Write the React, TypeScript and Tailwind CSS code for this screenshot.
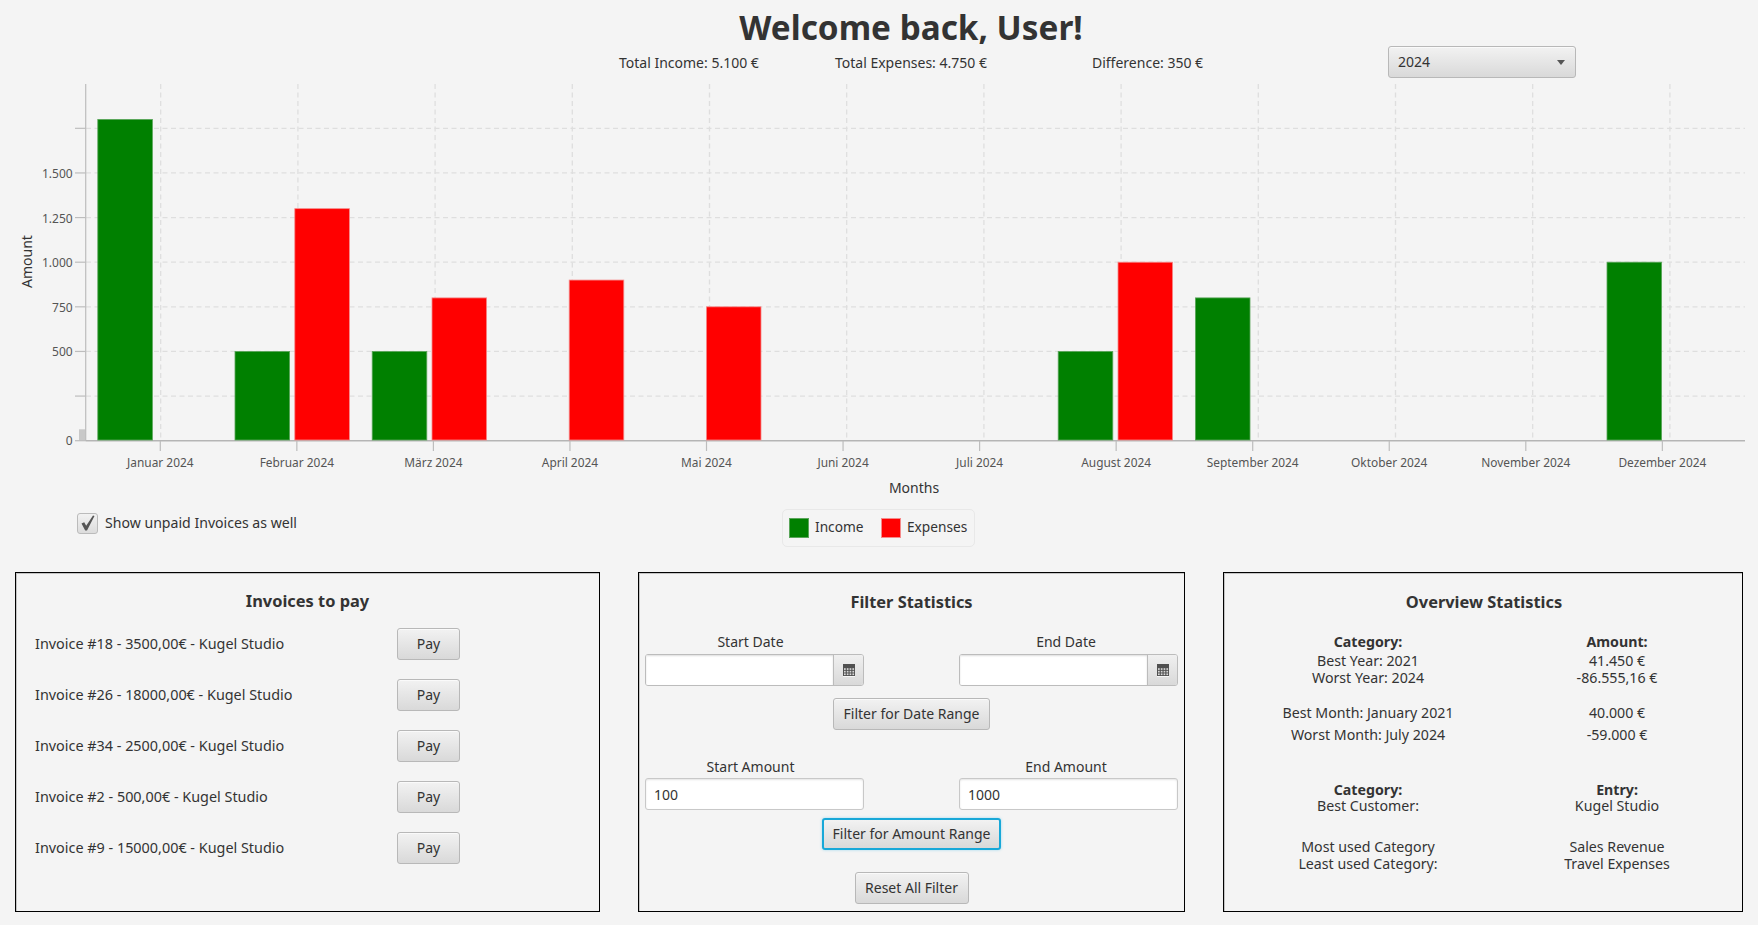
import React from "react";

const FONT = "font-['Noto_Sans','Open_Sans',sans-serif]";
const GREEN = "#008000";
const RED = "#ff0000";
const months = ["Januar 2024","Februar 2024","März 2024","April 2024","Mai 2024","Juni 2024","Juli 2024","August 2024","September 2024","Oktober 2024","November 2024","Dezember 2024"];
const income: Record<number, number> = { 0: 1800, 1: 500, 2: 500, 7: 500, 8: 800, 11: 1000 };
const expenses: Record<number, number> = { 1: 1300, 2: 800, 3: 900, 4: 750, 7: 1000 };

const Y0 = 84;
const yOf = (v: number) => 440.7 - Y0 - v * 0.1785;
const fontFamily = "'Noto Sans','Open Sans',sans-serif";

function Chart() {
  const ticks = [0, 250, 500, 750, 1000, 1250, 1500, 1750];
  const labelled = [0, 500, 750, 1000, 1250, 1500];
  return (
    <svg width={1758} height={418} className="block shrink-0" style={{ fontFamily }}>
      {ticks.slice(1).map((t) => (
        <line key={t} x1={86} x2={1745} y1={yOf(t)} y2={yOf(t)} stroke="#dedede" strokeWidth={1.3} strokeDasharray="5 3.5" />
      ))}
      {months.map((_, i) => (
        <line key={i} x1={160.7 + 137.2 * i} x2={160.7 + 137.2 * i} y1={0} y2={356} stroke="#dedede" strokeWidth={1.3} strokeDasharray="5 3.5" />
      ))}
      <rect x={79} y={345.3} width={6.7} height={11.4} fill="#c8c8c8" />
      <line x1={85.7} x2={85.7} y1={0} y2={357} stroke="#bdbdbd" strokeWidth={1.2} />
      <line x1={85.7} x2={1745} y1={356.7} y2={356.7} stroke="#b5b5b5" strokeWidth={1.5} />
      {ticks.map((t) => (
        <line key={t} x1={75} x2={85.7} y1={yOf(t)} y2={yOf(t)} stroke="#bdbdbd" strokeWidth={1.2} />
      ))}
      {labelled.map((t) => (
        <text key={t} x={72.7} y={yOf(t) + (t === 0 ? 4.5 : 5)} textAnchor="end" fontSize={12} fill="#555">{t === 0 ? "0" : t.toLocaleString("de-DE")}</text>
      ))}
      {months.map((m, i) => {
        const x = 160.3 + 136.55 * i;
        return (
          <g key={m}>
            <line x1={x} x2={x} y1={357} y2={367} stroke="#bdbdbd" strokeWidth={1.2} />
            <text x={x} y={383} textAnchor="middle" fontSize={11.9} fill="#555">{m}</text>
          </g>
        );
      })}
      {Object.entries(income).map(([k, v]) => (
        <rect key={k} x={97.8 + 137.2 * Number(k)} y={yOf(v)} width={54.6} height={356 - yOf(v)} fill={GREEN} stroke="#5aa55a" strokeWidth={0.8} />
      ))}
      {Object.entries(expenses).map(([k, v]) => (
        <rect key={k} x={157.6 + 137.2 * Number(k)} y={yOf(v)} width={54.6} height={356 - yOf(v)} fill={RED} stroke="#f58a8a" strokeWidth={0.8} />
      ))}
      <text x={914} y={409} textAnchor="middle" fontSize={14} fill="#333">Months</text>
      <text transform="translate(32 177.5) rotate(-90)" textAnchor="middle" fontSize={14} fill="#333">Amount</text>
    </svg>
  );
}

const btnBase = "h-[32px] rounded-[3px] bg-gradient-to-b from-[#f2f2f2] to-[#d9d9d9] text-[14px] leading-none text-[#333] flex items-center justify-center shrink-0";
const btnNormal = "border border-[#b8b8b8] shadow-[inset_0_1px_0_#fafafa]";
const btnFocus = "border-2 border-[#18a8d8] shadow-[0_0_3px_#9fd8ee]";

function Btn({ w, children, focused }: { w: string; children: React.ReactNode; focused?: boolean }) {
  return <div className={`${btnBase} ${w} ${focused ? btnFocus : btnNormal}`}>{children}</div>;
}

function CalendarIcon() {
  return (
    <svg width={12} height={13} viewBox="0 0 12 13">
      <rect x={0} y={0} width={12} height={12} fill="#505050" />
      <rect x={0} y={12} width={12} height={1} fill="#f6f6f6" />
      {[1, 3.8, 6.6, 9.4].map((x) =>
        [4.2, 6.8, 9.4].map((y) => <rect key={`${x}-${y}`} x={x} y={y} width={1.7} height={1.7} fill="#d8d8d8" />)
      )}
    </svg>
  );
}

function DateField() {
  return (
    <div className="h-[32px] w-[219px] flex rounded-[3px] border border-[#bcbcbc] overflow-hidden">
      <div className="flex-1 bg-white shadow-[inset_0_1px_2px_#dddddd]" />
      <div className="w-[30px] border-l border-[#bcbcbc] bg-gradient-to-b from-[#f0f0f0] to-[#d9d9d9] flex items-center justify-center">
        <CalendarIcon />
      </div>
    </div>
  );
}

function TextField({ value }: { value: string }) {
  return (
    <div className="h-[32px] w-[219px] flex items-center pl-[8px] rounded-[3px] border border-[#c8c8c8] bg-white text-[14px] text-[#333] shadow-[inset_0_1px_2px_#e4e4e4]">{value}</div>
  );
}

const Panel = ({ w, children }: { w: string; children: React.ReactNode }) => (
  <div className={`${w} h-[340px] border border-black shadow-[inset_1px_1px_0_#c4c4c4] flex flex-col`}>{children}</div>
);

const invoices = [
  "Invoice #18 - 3500,00€ - Kugel Studio",
  "Invoice #26 - 18000,00€ - Kugel Studio",
  "Invoice #34 - 2500,00€ - Kugel Studio",
  "Invoice #2 - 500,00€ - Kugel Studio",
  "Invoice #9 - 15000,00€ - Kugel Studio",
];

function Line({ a, b, bold, mt = 0 }: { a: string; b: string; bold?: boolean; mt?: number }) {
  return (
    <div className={`flex h-[17px] items-center leading-none text-[14.2px] ${bold ? "font-bold" : ""}`} style={{ marginTop: mt }}>
      <div className="w-[250px] text-center ml-[20px]">{a}</div>
      <div className="w-[252px] text-center">{b}</div>
    </div>
  );
}

export default function App() {
  return (
    <div className={`${FONT} w-[1758px] h-[925px] overflow-hidden bg-[#f4f4f4] text-[#333] flex flex-col`}>
      <div className="h-[46px] pt-[9px] pl-[64px] text-center text-[33.3px] font-bold leading-[36px] text-[#333] shrink-0">Welcome back, User!</div>
      <div className="h-[38px] shrink-0 flex items-start text-[14px] text-[#333]">
        <div className="ml-[619px] w-[216px] mt-[8px] leading-[18px]">Total Income: 5.100 €</div>
        <div className="w-[257px] mt-[8px] leading-[18px]">Total Expenses: 4.750 €</div>
        <div className="w-[296px] mt-[8px] leading-[18px]">Difference: 350 €</div>
        <div className={`${btnBase} ${btnNormal} w-[188px] !justify-between pl-[9px] pr-[10px]`}>
          <span>2024</span>
          <span className="w-0 h-0 border-x-[4.5px] border-x-transparent border-t-[5px] border-t-[#555]" />
        </div>
      </div>
      <Chart />
      <div className="h-[70px] shrink-0 relative">
        <div className="absolute left-[77px] top-[11px] flex items-center gap-[7px] text-[14.1px]">
          <div className="w-[21px] h-[21px] rounded-[3px] border border-[#bbbbbb] bg-gradient-to-b from-[#f2f2f2] to-[#dcdcdc] flex items-center justify-center">
            <svg width={19} height={19} viewBox="0 0 19 19"><path d="M3.5 9.5 L6.2 8.2 L8.2 11.8 L15 1.5 L16.5 2 L9 16.5 L7.2 16.5 Z" fill="#555" /></svg>
          </div>
          <span className="mt-[-2px]">Show unpaid Invoices as well</span>
        </div>
        <div className="absolute left-[782px] top-[7px] w-[193px] h-[38px] rounded-[5px] border border-[#e8e8e8] flex items-center pl-[6px] text-[13.7px]">
          <span className="w-[20px] h-[20px] bg-[#008000] border border-[#5aa55a]" />
          <span className="ml-[6px] w-[66px] mt-[-1px]">Income</span>
          <span className="w-[20px] h-[20px] bg-[#ff0000] border border-[#f58a8a]" />
          <span className="ml-[6px] mt-[-1px]">Expenses</span>
        </div>
      </div>
      <div className="flex pl-[15px] gap-[38px] text-[14px] text-[#333]">
        <Panel w="w-[585px]">
          <div className="mt-[17px] h-[22px] text-center text-[16.4px] font-bold leading-[22px]">Invoices to pay</div>
          <div className="mt-[16px] flex flex-col gap-[19px]">
            {invoices.map((t) => (
              <div key={t} className="flex items-center pl-[19px]">
                <div className="w-[362px] text-[14.4px] mt-[-1px]">{t}</div>
                <Btn w="w-[63px]">Pay</Btn>
              </div>
            ))}
          </div>
        </Panel>
        <Panel w="w-[547px]">
          <div className="mt-[18px] h-[22px] text-center text-[16.4px] font-bold leading-[22px]">Filter Statistics</div>
          <div className="mt-[20px] flex px-[6px] justify-between leading-[18px]">
            <div className="w-[219px] pr-[8px] text-center">Start Date</div>
            <div className="w-[219px] pr-[5px] text-center">End Date</div>
          </div>
          <div className="mt-[3px] flex px-[6px] justify-between"><DateField /><DateField /></div>
          <div className="mt-[12px] flex justify-center"><Btn w="w-[157px]">Filter for Date Range</Btn></div>
          <div className="mt-[28px] flex px-[6px] justify-between leading-[18px]">
            <div className="w-[219px] pr-[8px] text-center">Start Amount</div>
            <div className="w-[219px] pr-[5px] text-center">End Amount</div>
          </div>
          <div className="mt-[2px] flex px-[6px] justify-between"><TextField value="100" /><TextField value="1000" /></div>
          <div className="mt-[8px] flex justify-center"><Btn w="w-[179px]" focused>Filter for Amount Range</Btn></div>
          <div className="mt-[22px] flex justify-center"><Btn w="w-[114px]">Reset All Filter</Btn></div>
        </Panel>
        <Panel w="w-[520px]">
          <div className="mt-[18px] pl-[2px] h-[22px] text-center text-[16.4px] font-bold leading-[22px]">Overview Statistics</div>
          <div className="mt-[21px]">
            <Line a="Category:" b="Amount:" bold />
            <Line a="Best Year: 2021" b="41.450 €" mt={2} />
            <Line a="Worst Year: 2024" b="-86.555,16 €" />
            <Line a="Best Month: January 2021" b="40.000 €" mt={18} />
            <Line a="Worst Month: July 2024" b="-59.000 €" mt={5} />
            <Line a="Category:" b="Entry:" bold mt={38} />
            <Line a="Best Customer:" b="Kugel Studio" mt={-1} />
            <Line a="Most used Category" b="Sales Revenue" mt={24} />
            <Line a="Least used Category:" b="Travel Expenses" />
          </div>
        </Panel>
      </div>
    </div>
  );
}
